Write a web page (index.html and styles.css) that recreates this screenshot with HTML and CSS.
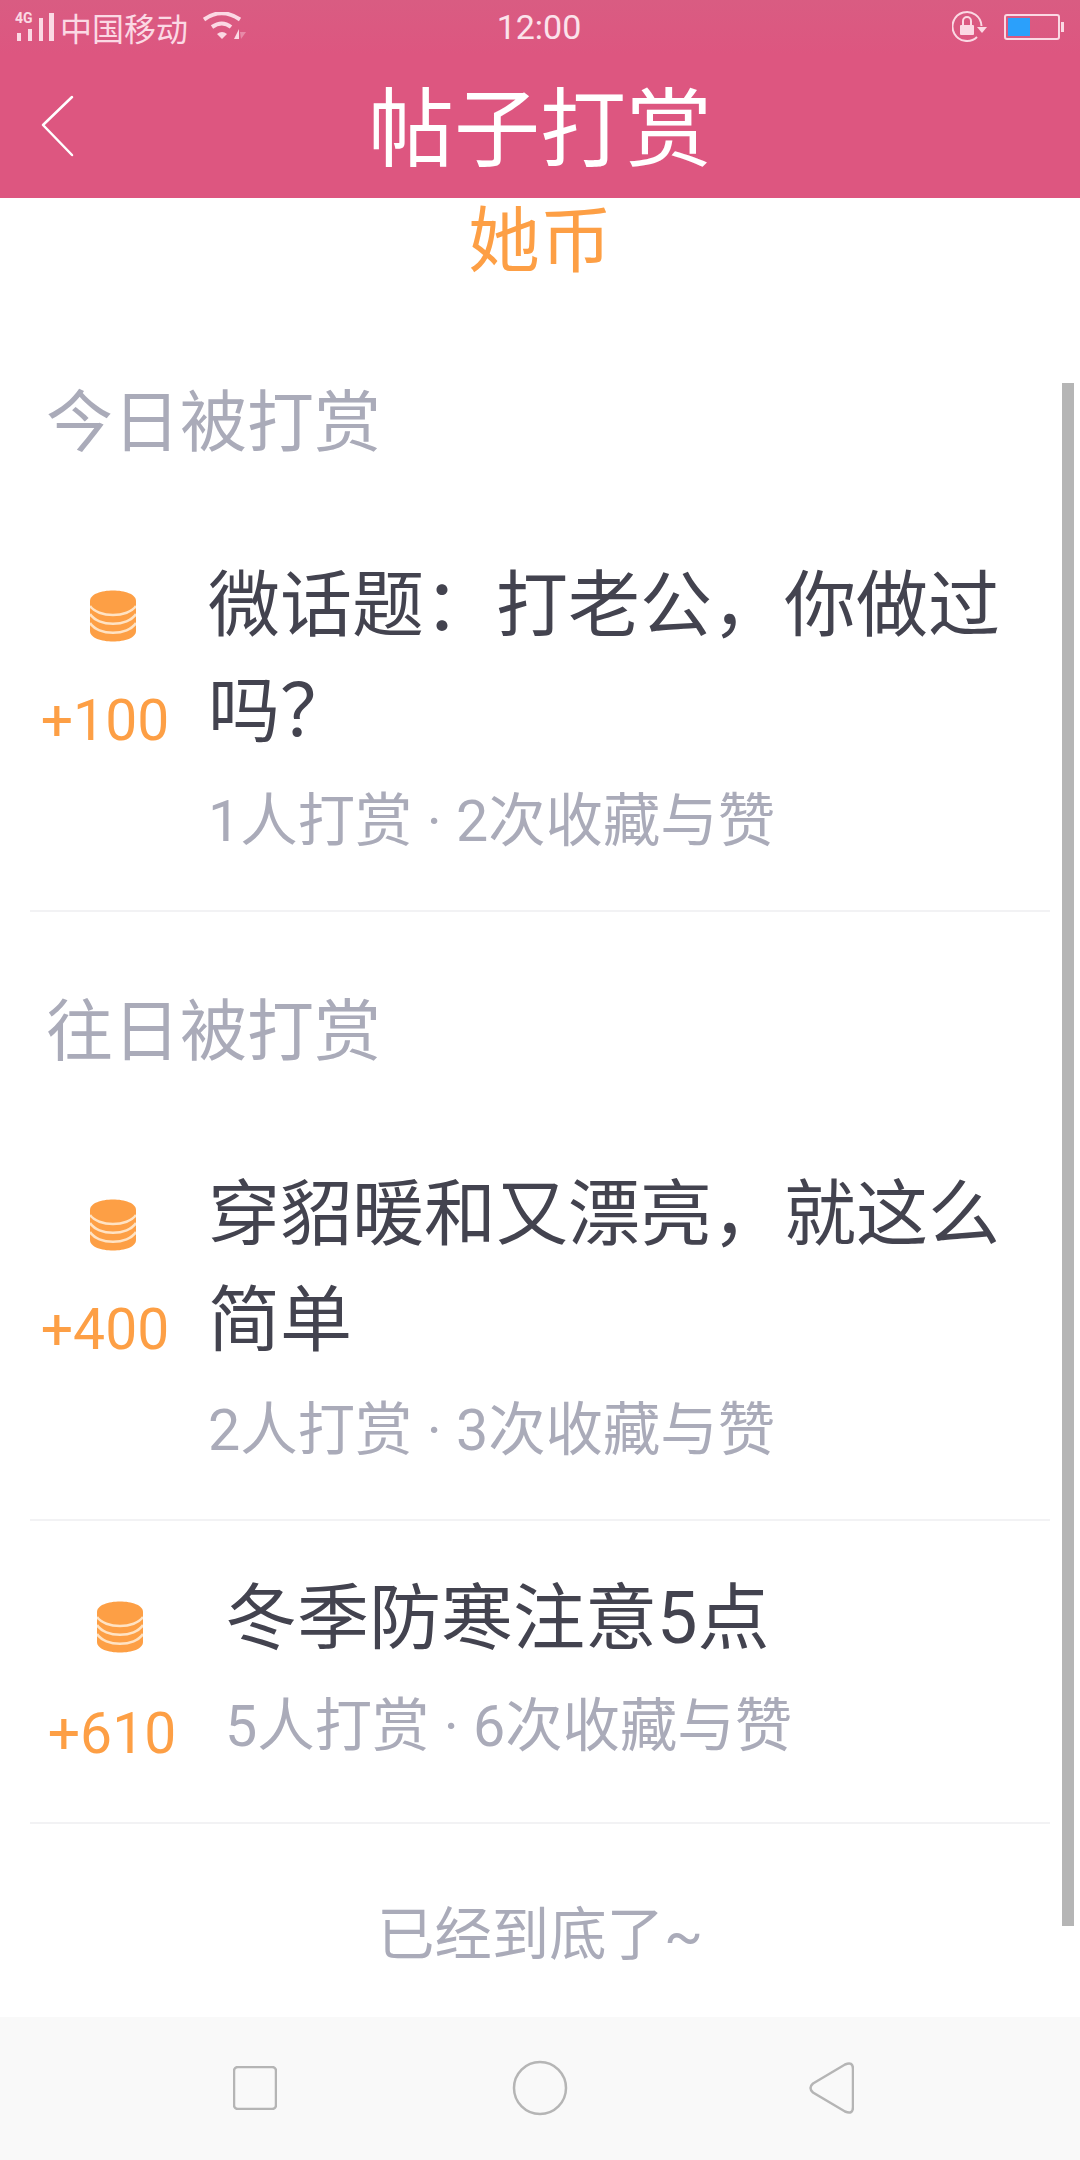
FILE: index.html
```html
<!DOCTYPE html>
<html lang="zh-CN">
<head>
  <meta charset="UTF-8">
  <meta name="viewport" content="width=device-width, initial-scale=1.0">
  <title>帖子打赏</title>
  <link rel="stylesheet" href="styles.css">
</head>
<body>
  <div class="screen">
    <div class="top">
      <div class="status">
        <div class="status-left">
          <svg class="signal" width="44" height="34" viewBox="0 0 44 34">
            <text x="1" y="13" class="signal-4g">4G</text>
            <rect x="3" y="23" width="4" height="8" />
            <rect x="14" y="19" width="4" height="12" />
            <rect x="25" y="8" width="4" height="23" />
            <rect x="35" y="3" width="5" height="28" />
          </svg>
          <span class="carrier">中国移动</span>
          <svg class="wifi" width="44" height="30" viewBox="0 0 44 30">
            <path d="M1 7.500 Q18.500 -5 37 7.500" fill="none" stroke="#fbd9e4" stroke-width="4" />
            <path d="M9 15 Q19 8 28 15" fill="none" stroke="#fbd9e4" stroke-width="4" />
            <path d="M14 22 Q19 18 24 22 L19 27 Z" fill="#fbd9e4" />
            <path d="M31 27 L36 17 L36 27 Z" fill="#fbd9e4" />
            <path d="M37 20 L43 20 L38 27 Z" fill="#e88aa8" />
          </svg>
        </div>
        <span class="clock">12:00</span>
        <div class="status-right">
          <svg width="36" height="34" viewBox="0 0 36 34">
            <path d="M25 27 A14.500 14.500 0 1 1 29.500 16" fill="none" stroke="#fbd9e4" stroke-width="2" />
            <path d="M25 17 H35 L30 23 Z" fill="#fbd9e4" />
            <rect x="8" y="15" width="14" height="10" rx="1" fill="#fbd9e4" />
            <path d="M11 15 V11 A4 4 0 0 1 19 11 V15" fill="none" stroke="#fbd9e4" stroke-width="2" />
          </svg>
          <div class="battery"><div class="battery-level"></div></div>
          <div class="battery-tip"></div>
        </div>
      </div>
      <div class="header">
        <svg class="back" width="34" height="62" viewBox="0 0 34 62">
          <path d="M32 2 L3 30 L32 60" fill="none" stroke="#fff" stroke-width="2.5" stroke-linecap="round" stroke-linejoin="round" />
        </svg>
        <h1>帖子打赏</h1>
      </div>
    </div>

    <div class="content">
      <div class="unit">她币</div>

      <h2 class="section-title">今日被打赏</h2>
      <div class="row row-double">
        <div class="reward">
          <svg class="coins" width="46" height="52" viewBox="0 0 46 52"><use href="#coin" /></svg>
          <span class="amount">+100</span>
        </div>
        <div class="info">
          <p class="post-title">微话题：打老公，你做过吗？</p>
          <p class="meta">1人打赏 · 2次收藏与赞</p>
        </div>
      </div>

      <h2 class="section-title section-next">往日被打赏</h2>
      <div class="row row-double">
        <div class="reward">
          <svg class="coins" width="46" height="52" viewBox="0 0 46 52"><use href="#coin" /></svg>
          <span class="amount">+400</span>
        </div>
        <div class="info">
          <p class="post-title">穿貂暖和又漂亮，就这么简单</p>
          <p class="meta">2人打赏 · 3次收藏与赞</p>
        </div>
      </div>
      <div class="row row-single">
        <div class="reward">
          <svg class="coins" width="46" height="52" viewBox="0 0 46 52"><use href="#coin" /></svg>
          <span class="amount">+610</span>
        </div>
        <div class="info">
          <p class="post-title">冬季防寒注意5点</p>
          <p class="meta">5人打赏 · 6次收藏与赞</p>
        </div>
      </div>

      <p class="end">已经到底了~</p>
      <div class="scrollbar"></div>
    </div>

    <div class="nav">
      <svg width="44" height="44" viewBox="0 0 44 44"><rect x="1" y="1" width="42" height="42" rx="4" /></svg>
      <svg width="56" height="56" viewBox="0 0 56 56"><circle cx="28" cy="28" r="26" /></svg>
      <svg class="nav-back" width="46" height="52" viewBox="0 0 46 52"><path d="M4 21.500 L36 2.500 Q44 -1 44 7 V45 Q44 53 36 49.500 L4 30.500 Q-1 26 4 21.500 Z" transform="translate(1 0)" /></svg>
    </div>
  </div>

  <svg class="defs" width="0" height="0">
    <symbol id="coin" viewBox="0 0 46 52">
      <path d="M0 11 C0 -3 46 -3 46 11 V41 C46 55 0 55 0 41 Z" fill="#fd9f45" />
      <path d="M0 16 C8 28 38 28 46 16 M0 24 C8 37 38 37 46 24 M0 33 C8 46 38 46 46 33" fill="none" stroke="#ffe3c4" stroke-width="2.500" />
    </symbol>
  </svg>
</body>
</html>
```

FILE: styles.css
```css
* {
  box-sizing: border-box;
}

body {
  margin: 0;
  background: #fff;
  font-family: Roboto, "Noto Sans CJK SC", sans-serif;
}

.screen {
  width: 1080px;
  height: 2160px;
  display: flex;
  flex-direction: column;
  overflow: hidden;
}

.top {
  height: 198px;
  background: #dd5680;
  position: relative;
  z-index: 1;
}

.status {
  height: 54px;
  background: linear-gradient(#d95c82, #dd5680);
  display: grid;
  grid-template-columns: 1fr auto 1fr;
  align-items: center;
  padding: 0 16px 0 14px;
  color: #fbd9e4;
  font-size: 32px;
}

.status-left {
  display: flex;
  align-items: center;
}

.signal {
  fill: #fbd9e4;
  margin-right: 2px;
}

.signal-4g {
  font-size: 14px;
  font-weight: 700;
}

.carrier {
  width: 128px;
}

.wifi {
  margin-left: 15px;
}

.clock {
  color: #fbe3eb;
  font-size: 34px;
}

.status-right {
  display: flex;
  align-items: center;
  justify-content: flex-end;
}

.battery {
  width: 56px;
  height: 26px;
  margin-left: 16px;
  border: 2px solid #fbd9e4;
  border-radius: 3px;
  padding: 2px;
}

.battery-level {
  width: 22px;
  height: 100%;
  background: #2ba0fb;
}

.battery-tip {
  width: 3px;
  height: 10px;
  margin-left: 1px;
  background: #fbd9e4;
}

.header {
  height: 144px;
  padding-top: 10px;
  display: flex;
  align-items: center;
  justify-content: center;
  position: relative;
}

.back {
  position: absolute;
  left: 40px;
  top: 41px;
}

h1 {
  margin: 0;
  color: #fff;
  font-size: 86px;
  font-weight: 400;
  line-height: 1;
}

.content {
  flex: 1;
  position: relative;
  padding: 0 30px;
}

.unit {
  height: 84px;
  margin-top: 2px;
  text-align: center;
  color: #fd9f45;
  font-size: 72px;
  line-height: 84px;
}

.section-title {
  margin: 94px 0 0;
  padding-left: 16px;
  color: #aaabb9;
  font-size: 67px;
  font-weight: 400;
  line-height: 90px;
}

.section-next {
  margin-top: 75px;
}

.row {
  display: flex;
  border-bottom: 2px solid #f2f2f4;
}

.row-double {
  height: 444px;
  padding-top: 85px;
}

.row-single {
  height: 303px;
  padding-top: 45px;
  padding-left: 7px;
}

.reward {
  width: 150px;
  flex: none;
  display: flex;
  flex-direction: column;
  align-items: center;
  padding-top: 37px;
}

.row-single .reward {
  padding-top: 35px;
}

.coins {
  display: block;
  margin-left: 16px;
}

.amount {
  margin-top: 46px;
  color: #fd9f45;
  font-size: 57px;
  line-height: 66px;
}

.row-single .amount {
  margin-top: 48px;
}

.info {
  flex: 1;
  padding-left: 28px;
  padding-right: 30px;
}

.row-single .info {
  padding-left: 38px;
}

.post-title {
  margin: 0;
  color: #43434f;
  font-size: 72px;
  line-height: 106px;
}

.meta {
  margin: 16px 0 0;
  color: #aaabb9;
  font-size: 57.4px;
  line-height: 82px;
}

.row-single .meta {
  margin-top: 14px;
}

.end {
  margin: 72px 0 0;
  text-align: center;
  color: #aaabb9;
  font-size: 57.4px;
  line-height: 80px;
}

.scrollbar {
  position: absolute;
  top: 185px;
  right: 6px;
  width: 12px;
  height: 1543px;
  background: #b5b5b5;
}

.nav {
  height: 143px;
  padding-bottom: 2px;
  background: #f9f9f9;
  display: flex;
  align-items: center;
  fill: none;
  stroke: #b5b5b5;
  stroke-width: 2.5;
  padding-left: 233px;
  gap: 235px;
}

.nav-back {
  margin-left: 5px;
}

.defs {
  position: absolute;
}
```
